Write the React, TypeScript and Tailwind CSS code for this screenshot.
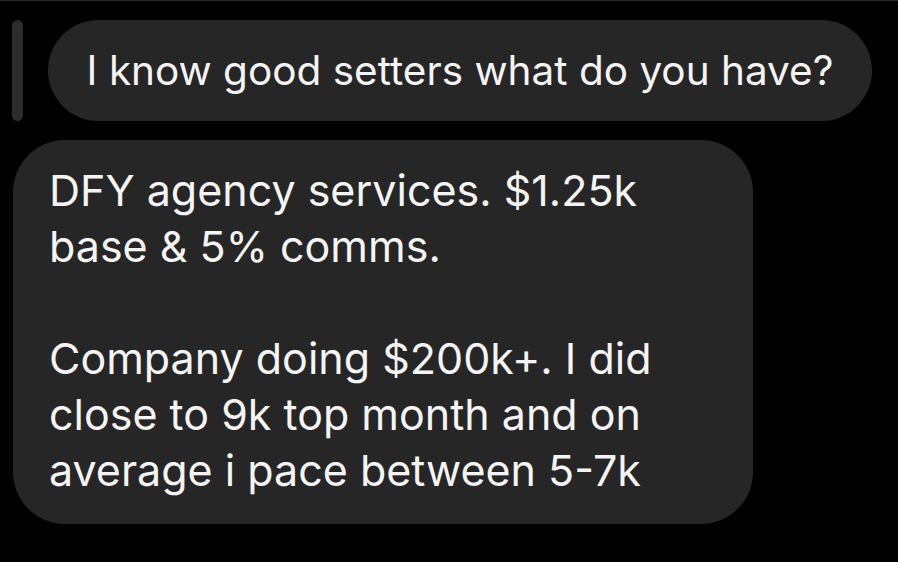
import React from 'react';

const font = { fontFamily: 'Inter, "Noto Sans", sans-serif' };

export default function App() {
  return (
    <div className="w-[898px] h-[562px] bg-black border-t border-[#2c2c2c] overflow-hidden text-[#f4f4f4]" style={font}>
      <div className="flex items-stretch pl-[12px] pt-[19px] gap-[25px]">
        <div className="w-[11px] rounded-full bg-[#2c2c2c]" />
        <div className="w-[824px] h-[101px] rounded-full bg-[#262626] flex items-center justify-center pt-[1px] text-[40.5px] leading-none">
          I know good setters what do you have?
        </div>
      </div>
      <div className="ml-[13px] mt-[19px] w-[740px] h-[384px] rounded-[52px] bg-[#262626] pl-[36px] pt-[22px] text-[43px] leading-[56px]">
        <p>DFY agency services. $1.25k</p>
        <p>base &amp; 5% comms.</p>
        <p>&nbsp;</p>
        <p>Company doing $200k+. I did</p>
        <p>close to 9k top month and on</p>
        <p>average i pace between 5-7k</p>
      </div>
    </div>
  );
}
